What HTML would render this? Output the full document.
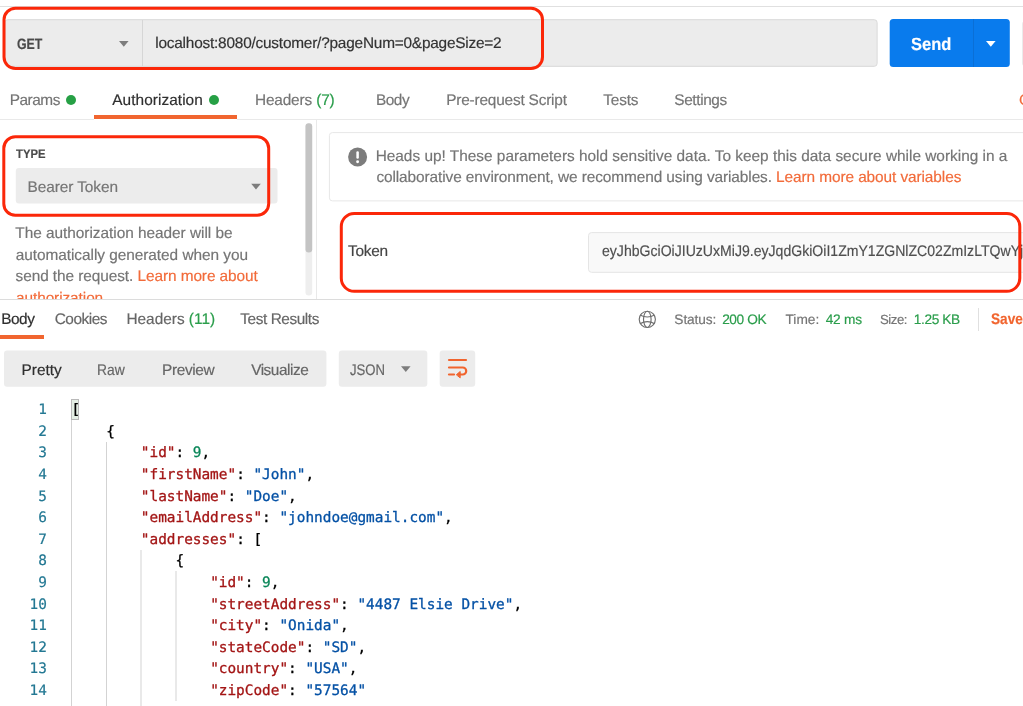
<!DOCTYPE html>
<html lang="en">
<head>
<meta charset="utf-8">
<title>Postman request</title>
<style>
html,body{margin:0;padding:0;}
body{width:1023px;height:706px;overflow:hidden;background:#fff;position:relative;
  font-family:"Liberation Sans","DejaVu Sans",sans-serif;font-size:14.4px;color:#6b6b6b;text-rendering:geometricPrecision;}
.abs{position:absolute;}
.t{position:absolute;white-space:nowrap;line-height:20px;height:20px;-webkit-text-stroke:0.18px;}
.hl{position:absolute;height:1px;background:#e9e9e9;}
.vl{position:absolute;width:1px;background:#e9e9e9;}
.red{position:absolute;border:3px solid #fb2709;border-radius:13px;box-sizing:border-box;}
.or{color:#f26b3a;}
.gr{color:#2a9d4b;}
.dot{position:absolute;width:10px;height:10px;border-radius:50%;background:#26a045;}
.caret{position:absolute;width:0;height:0;border-left:4.8px solid transparent;border-right:4.8px solid transparent;border-top:5.8px solid #7a7a7a;}
.code{position:absolute;left:0;top:400.2px;font-family:"DejaVu Sans Mono","Liberation Mono",monospace;font-size:14.4px;}
.ln{-webkit-text-stroke:0.2px;position:absolute;left:0;width:46.8px;text-align:right;color:#237893;height:21.6px;line-height:21.6px;white-space:pre;}
.cl{-webkit-text-stroke:0.3px;position:absolute;left:71.5px;height:21.6px;line-height:21.6px;white-space:pre;color:#000;}
.k{color:#a31515;}
.s{color:#0451a5;}
.n{color:#098658;}
.guide{position:absolute;width:1px;background:#d3d3d3;}
</style>
</head>
<body>
<div id="app" style="position:absolute;left:0;top:0;width:1023px;height:706px;overflow:hidden;will-change:transform;">
<!-- base shapes layer (page pixel coordinates) -->
<svg class="abs" style="left:0;top:0;" width="1023" height="706" viewBox="0 0 1023 706" fill="none">
<!-- URL bar -->
<rect x="4.9" y="19.7" width="872.2" height="46.6" rx="2.8" fill="#ececec" stroke="#d9d9d9"/>
<!-- Send button -->
<rect x="889.7" y="18.9" width="120.1" height="48.1" rx="3.5" fill="#097bed"/>
<rect x="1022" y="21.2" width="12" height="44.8" rx="3" fill="#ebebeb"/>
<!-- auth type select -->
<rect x="15.8" y="168" width="261.7" height="35.6" rx="3" fill="#ececec"/>
<!-- scrollbar -->
<rect x="305.5" y="123.3" width="6.7" height="172.2" rx="3.3" fill="#eeeeee"/>
<rect x="305.5" y="123.3" width="6.7" height="129.2" rx="3.3" fill="#c4c4c4"/>
<!-- info box + token input -->
<rect x="329.4" y="132.6" width="710" height="68.3" rx="3" fill="#fff" stroke="#e7e7e7"/>
<rect x="588.5" y="232.6" width="450" height="39.7" rx="3" fill="#f9f9f9" stroke="#e5e5e5"/>
<!-- view switch boxes -->
<rect x="4" y="350.6" width="322.4" height="36.1" rx="3" fill="#ececec"/>
<rect x="338.8" y="350.6" width="88.5" height="36.1" rx="3" fill="#ececec"/>
<rect x="439.7" y="350.6" width="35.5" height="36.1" rx="3" fill="#ececec"/>
<!-- dropdown carets -->
<path d="M119 41h9.600l-4.800 5.800zM251.200 183.800h9.600l-4.800 5.800zM401 366.300h9.600l-4.800 5.800z" fill="#7d7d7d"/>
<path d="M986 41h9.600l-4.800 5.800z" fill="#fff"/>
<!-- unsaved dots -->
<circle cx="71" cy="100" r="5" fill="#26a045"/><circle cx="214" cy="100" r="5" fill="#26a045"/>
<!-- info icon -->
<circle cx="357.6" cy="157" r="9.5" fill="#7c7c7c"/>
<rect x="356.350" y="151.200" width="2.5" height="7.600" rx="1.2" fill="#fff"/><circle cx="357.6" cy="161.800" r="1.450" fill="#fff"/>
<!-- globe -->
<g stroke="#6e6e6e" stroke-width="1.15">
<circle cx="647.3" cy="319.35" r="8.1"/><ellipse cx="647.3" cy="319.35" rx="3.8" ry="8.1"/>
<path d="M640 315Q647.3 319 654.6 315M640 323.700Q647.3 319.700 654.6 323.700"/>
</g>
<!-- word-wrap icon -->
<g stroke="#f1642e" stroke-width="2.2" stroke-linecap="round">
<path d="M449 360H466"/>
<path d="M449 367.5H462.700a3.500 3.500 0 0 1 0 7H460.500"/>
<path d="M449 374.5H454"/>
<path d="M456.600 374.5L460.200 371.500V377.500z" fill="#f1642e" stroke-width="1" stroke-linejoin="round"/>
</g>
</svg>

<!-- hairlines -->
<div class="hl" style="left:0;top:6px;width:1023px;background:#e0e0e0;"></div>
<div class="vl" style="left:142px;top:20px;height:46px;background:#d6d6d6;"></div>
<div class="vl" style="left:973px;top:19px;height:48px;background:#0a6fd6;"></div>
<div class="hl" style="left:0;top:119px;width:1023px;"></div>
<div class="abs" style="left:94px;top:115px;width:143px;height:5px;background:#fff;"></div>
<div class="abs" style="left:94px;top:115px;width:143px;height:4px;background:#f1652f;"></div>
<div class="vl" style="left:316px;top:120px;height:179px;"></div>
<div class="hl" style="left:0;top:298.5px;width:1023px;background:#dcdcdc;"></div>
<div class="abs" style="left:0;top:335px;width:44px;height:4px;background:#f1652f;"></div>
<div class="vl" style="left:977.6px;top:307.700px;height:23px;background:#e0e0e0;"></div>

<!-- clipped last line of the auth hint -->
<div class="abs" style="left:0;top:284px;width:300px;height:14.5px;overflow:hidden;"><div class="t or" id="a4" style="left:16px;top:5px;letter-spacing:-0.08px;font-size:15.4px;">authorization</div></div>

<div class="t" id="get" style="left:16.85px;top:35px;font-size:15px;color:#4a4a4a;font-weight:bold;transform:scaleX(0.8232);transform-origin:0 0;">GET</div>
<div class="t" id="url" style="left:155.25px;top:34px;font-size:15.4px;color:#333;letter-spacing:-0.216px;">localhost:8080/customer/?pageNum=0&amp;pageSize=2</div>
<div class="t" id="send" style="left:910.86px;top:34px;font-size:17.6px;color:#fff;font-weight:bold;transform:scaleX(0.9366);transform-origin:0 0;">Send</div>
<div class="t" id="t1" style="left:9.70px;top:91px;font-size:15.4px;color:#757575;letter-spacing:-0.460px;">Params</div>
<div class="t" id="t2" style="left:112.25px;top:91px;font-size:15.4px;color:#2f2f2f;letter-spacing:0.058px;">Authorization</div>
<div class="t" id="t3" style="left:254.93px;top:91px;font-size:15.4px;color:#757575;letter-spacing:-0.150px;">Headers <span class="gr">(7)</span></div>
<div class="t" id="t4" style="left:376.00px;top:91px;font-size:15.4px;color:#757575;letter-spacing:-0.483px;">Body</div>
<div class="t" id="t5" style="left:446.15px;top:91px;font-size:15.4px;color:#757575;letter-spacing:-0.188px;">Pre-request Script</div>
<div class="t" id="t6" style="left:603.27px;top:91px;font-size:15.4px;color:#757575;letter-spacing:-0.188px;">Tests</div>
<div class="t" id="t7" style="left:674.33px;top:91px;font-size:15.4px;color:#757575;letter-spacing:-0.393px;">Settings</div>
<div class="t" id="t8" style="left:1019.00px;top:91px;font-size:15.4px;color:#f26b3a;">Cookies</div>
<div class="t" id="type" style="left:16.32px;top:144px;font-size:12.4px;color:#4a4a4a;font-weight:bold;transform:scaleX(0.9095);transform-origin:0 0;">TYPE</div>
<div class="t" id="bt" style="left:27.57px;top:178px;font-size:15.4px;color:#757575;letter-spacing:-0.073px;">Bearer Token</div>
<div class="t" id="a1" style="left:15.32px;top:224px;font-size:15.4px;color:#757575;letter-spacing:-0.032px;">The authorization header will be</div>
<div class="t" id="a2" style="left:15.63px;top:246px;font-size:15.4px;color:#757575;letter-spacing:-0.039px;">automatically generated when you</div>
<div class="t" id="a3" style="left:15.54px;top:267px;font-size:15.4px;color:#757575;letter-spacing:-0.073px;">send the request. <span class="or">Learn more about</span></div>
<div class="t" id="h1" style="left:375.64px;top:147px;font-size:15.4px;color:#757575;letter-spacing:0.001px;">Heads up! These parameters hold sensitive data. To keep this data secure while working in a</div>
<div class="t" id="h2" style="left:376.38px;top:168px;font-size:15.4px;color:#757575;letter-spacing:-0.086px;">collaborative environment, we recommend using variables. <span class="or">Learn more about variables</span></div>
<div class="t" id="tok" style="left:348.04px;top:242px;font-size:15.4px;color:#444;letter-spacing:-0.237px;">Token</div>
<div class="t" id="tokv" style="left:602.30px;top:242px;font-size:15.4px;color:#4f4f4f;transform:scaleX(0.9142);transform-origin:0 0;">eyJhbGciOiJIUzUxMiJ9.eyJqdGkiOiI1ZmY1ZGNlZC02ZmIzLTQw<span>YjQtOGRkNy0</span></div>
<div class="t" id="r1" style="left:1.22px;top:310px;font-size:15.4px;color:#2f2f2f;letter-spacing:-0.483px;">Body</div>
<div class="t" id="r2" style="left:54.73px;top:310px;font-size:15.4px;color:#666666;letter-spacing:-0.467px;">Cookies</div>
<div class="t" id="r3" style="left:126.47px;top:310px;font-size:15.4px;color:#666666;letter-spacing:-0.009px;">Headers <span class="gr">(11)</span></div>
<div class="t" id="r4" style="left:240.32px;top:310px;font-size:15.4px;color:#666666;letter-spacing:-0.432px;">Test Results</div>
<div class="t" id="s1" style="left:674.35px;top:310px;font-size:13.7px;color:#757575;letter-spacing:-0.092px;">Status:</div>
<div class="t" id="s2" style="left:722.17px;top:310px;font-size:13.7px;color:#2a9d4b;letter-spacing:-0.410px;">200 OK</div>
<div class="t" id="s3" style="left:785.53px;top:310px;font-size:13.7px;color:#757575;letter-spacing:0.000px;">Time:</div>
<div class="t" id="s4" style="left:825.72px;top:310px;font-size:13.7px;color:#2a9d4b;letter-spacing:-0.250px;">42 ms</div>
<div class="t" id="s5" style="left:879.98px;top:310px;font-size:13.2px;color:#757575;letter-spacing:-0.438px;">Size:</div>
<div class="t" id="s6" style="left:913.85px;top:310px;font-size:13.7px;color:#2a9d4b;letter-spacing:-0.408px;">1.25 KB</div>
<div class="t" id="save" style="left:991.40px;top:310px;font-size:15.4px;color:#f1652f;font-weight:bold;transform:scaleX(0.8835);transform-origin:0 0;">Sav<span>e Response</span></div>
<div class="t" id="v1" style="left:21.53px;top:361px;font-size:15.4px;color:#2f2f2f;letter-spacing:0.010px;">Pretty</div>
<div class="t" id="v2" style="left:97.49px;top:361px;font-size:15.4px;color:#666666;transform:scaleX(0.9002);transform-origin:0 0;">Raw</div>
<div class="t" id="v3" style="left:162.08px;top:361px;font-size:15.4px;color:#666666;letter-spacing:-0.383px;">Preview</div>
<div class="t" id="v4" style="left:251.14px;top:361px;font-size:15.4px;color:#666666;letter-spacing:-0.463px;">Visualize</div>
<div class="t" id="json" style="left:349.50px;top:361px;font-size:15.4px;color:#666666;transform:scaleX(0.8538);transform-origin:0 0;">JSON</div>

<!-- code -->
<div class="abs" style="left:71px;top:399px;width:8px;height:21px;box-sizing:border-box;background:#e5efe5;border:1px solid #b9b9b9;"></div>
<div class="code" id="code">
<div class="ln" style="top:0.0px;">1</div><div class="cl" style="top:0.0px;">[</div>
<div class="ln" style="top:21.6px;">2</div><div class="cl" style="top:21.6px;">    {</div>
<div class="ln" style="top:43.2px;">3</div><div class="cl" style="top:43.2px;">        <span class="k">"id"</span>: <span class="n">9</span>,</div>
<div class="ln" style="top:64.8px;">4</div><div class="cl" style="top:64.8px;">        <span class="k">"firstName"</span>: <span class="s">"John"</span>,</div>
<div class="ln" style="top:86.4px;">5</div><div class="cl" style="top:86.4px;">        <span class="k">"lastName"</span>: <span class="s">"Doe"</span>,</div>
<div class="ln" style="top:108.0px;">6</div><div class="cl" style="top:108.0px;">        <span class="k">"emailAddress"</span>: <span class="s">"johndoe@gmail.com"</span>,</div>
<div class="ln" style="top:129.6px;">7</div><div class="cl" style="top:129.6px;">        <span class="k">"addresses"</span>: [</div>
<div class="ln" style="top:151.2px;">8</div><div class="cl" style="top:151.2px;">            {</div>
<div class="ln" style="top:172.8px;">9</div><div class="cl" style="top:172.8px;">                <span class="k">"id"</span>: <span class="n">9</span>,</div>
<div class="ln" style="top:194.4px;">10</div><div class="cl" style="top:194.4px;">                <span class="k">"streetAddress"</span>: <span class="s">"4487 Elsie Drive"</span>,</div>
<div class="ln" style="top:216.0px;">11</div><div class="cl" style="top:216.0px;">                <span class="k">"city"</span>: <span class="s">"Onida"</span>,</div>
<div class="ln" style="top:237.6px;">12</div><div class="cl" style="top:237.6px;">                <span class="k">"stateCode"</span>: <span class="s">"SD"</span>,</div>
<div class="ln" style="top:259.2px;">13</div><div class="cl" style="top:259.2px;">                <span class="k">"country"</span>: <span class="s">"USA"</span>,</div>
<div class="ln" style="top:280.8px;">14</div><div class="cl" style="top:280.8px;">                <span class="k">"zipCode"</span>: <span class="s">"57564"</span></div>
<div class="cl" style="top:302.4px;">            },</div>
</div>
<div class="guide" style="left:71px;top:420px;height:286px;"></div>
<div class="guide" style="left:106.2px;top:441.6px;height:265px;"></div>
<div class="guide" style="left:140px;top:549.6px;height:157px;width:2px;background:#e9e9e9;"></div>
<div class="guide" style="left:175px;top:571.2px;height:129.6px;width:2px;background:#e9e9e9;"></div>

<!-- red annotation rectangles (on top) -->
<svg class="abs" style="left:0;top:0;" width="1023" height="706" viewBox="0 0 1023 706" fill="none" stroke="#fb2709" stroke-width="3">
<rect x="4" y="8.3" width="538.5" height="60.3" rx="11.5"/>
<rect x="3.8" y="136.8" width="264.9" height="78.5" rx="11.5"/>
<rect x="341.3" y="213.5" width="678.5" height="77.8" rx="13"/>
</svg>
</div>
</body>
</html>
